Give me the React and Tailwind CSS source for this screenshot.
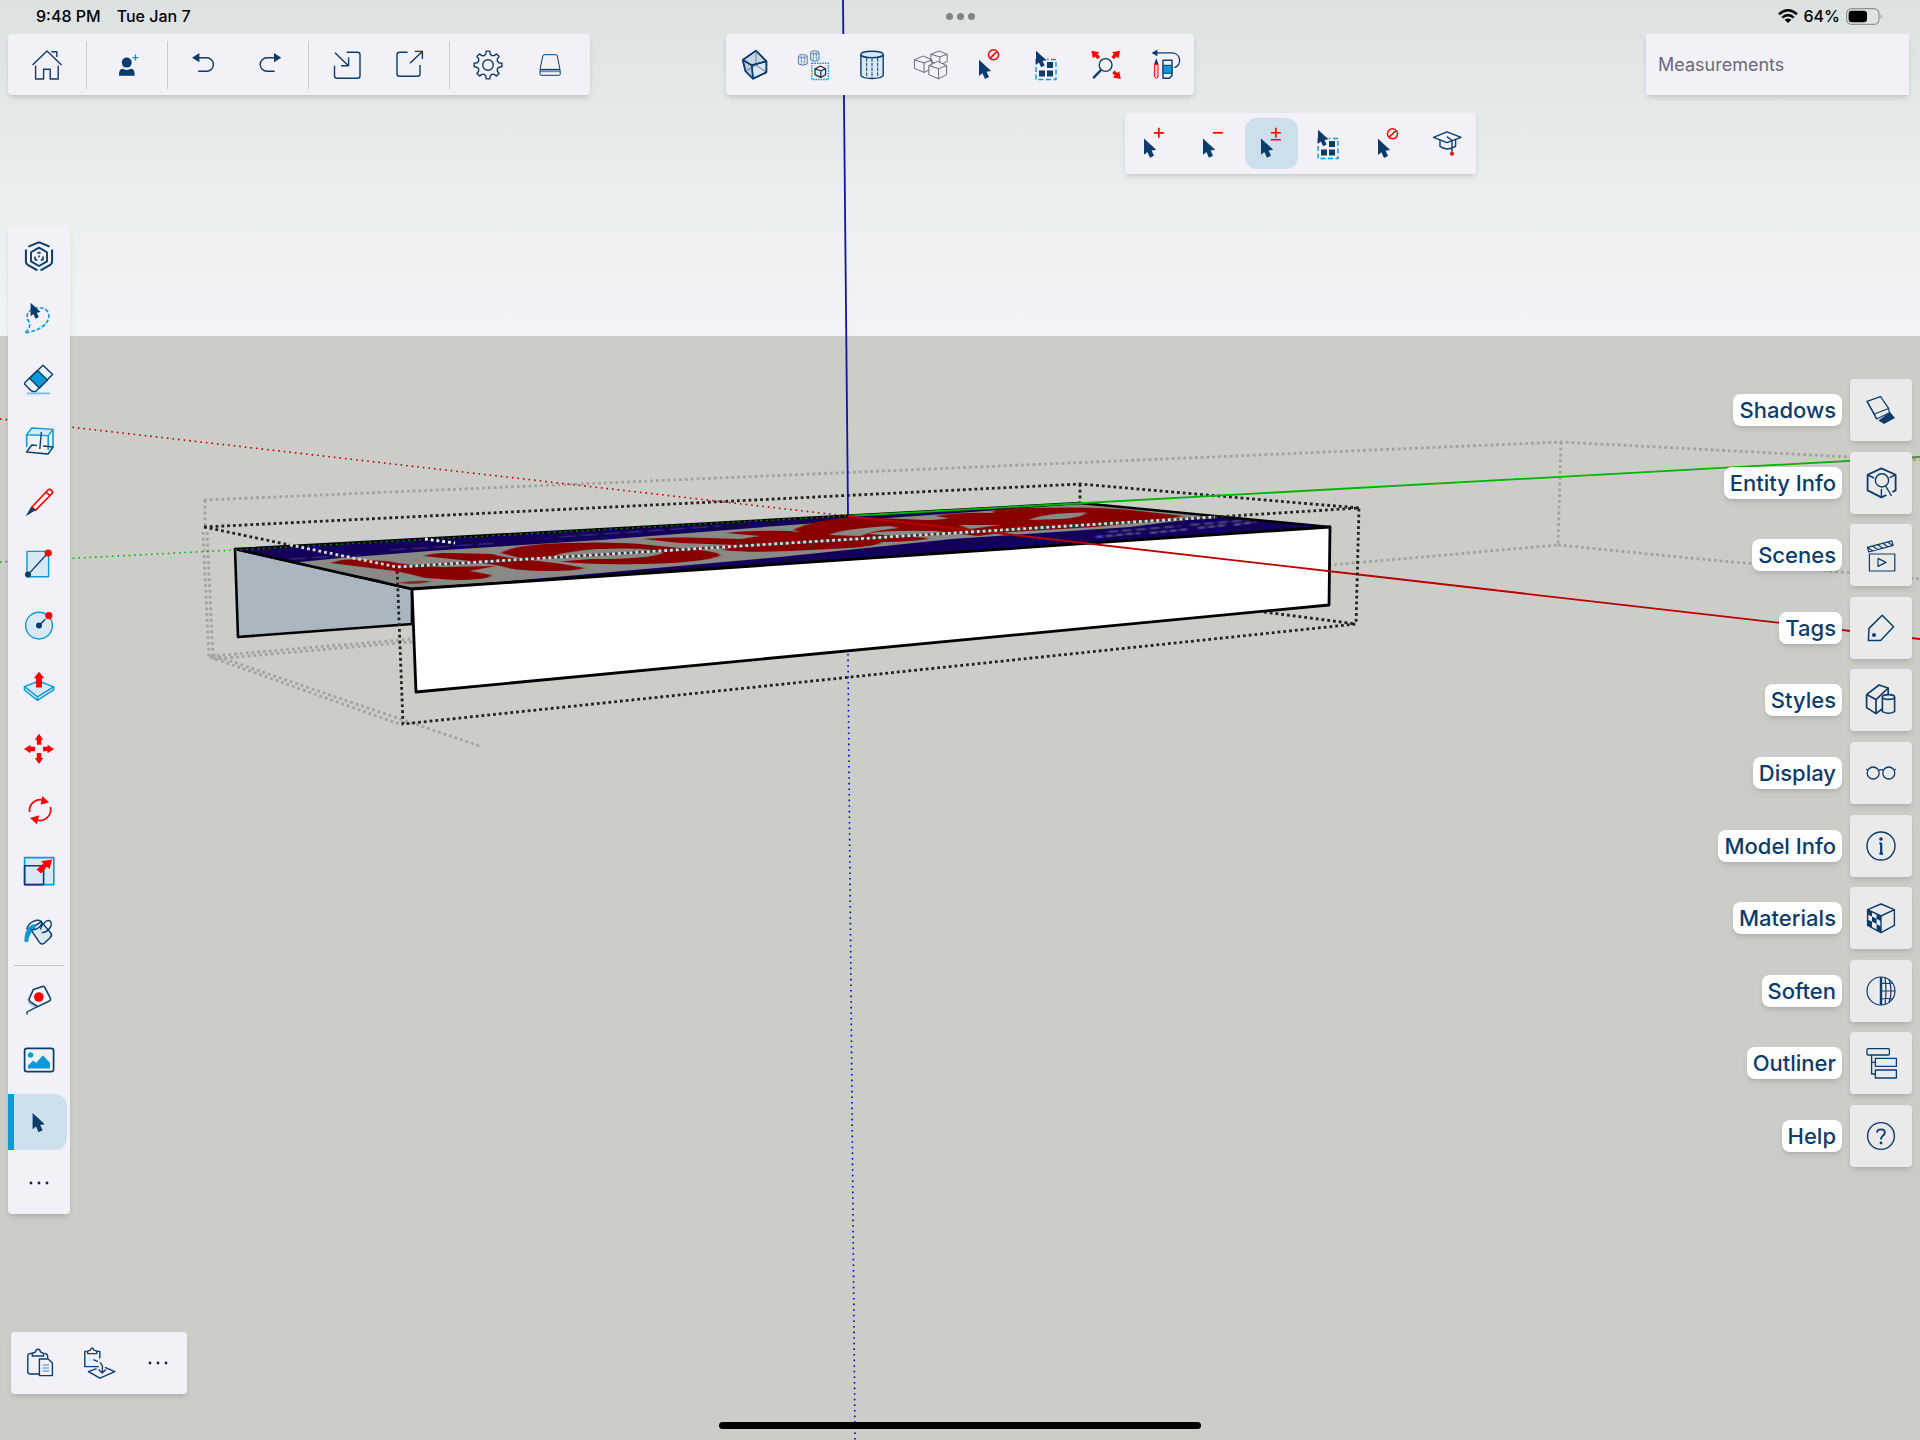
import React, { useState } from 'react';

const NAVY = '#0c3c6b';
const BLUE = '#0a9ad9';
const PALE = '#d8e8f5';
const RED = '#ff0000';

function Icon({ children }) {
  return (
    <svg viewBox="0 0 36 36" className="size-9 shrink-0" fill="none" stroke={NAVY} strokeWidth="1.4" strokeLinejoin="round" aria-hidden="true">
      {children}
    </svg>
  );
}

// Arrow cursor shared by the selection tools, tip at 0,0
function Cursor({ x, y, scale = 1 }) {
  return (
    <path
      d="M0 0V16.3L3.4 13.6L6 19.3L10 17.3L7.6 12L12.2 11.2Z"
      transform={`translate(${x} ${y}) scale(${scale})`}
      fill={NAVY}
      stroke="none"
    />
  );
}

function NoSign() {
  return <path d="M22.5 2.8a5 5 0 1 0 .01 0M19 11.4L26 4.4" stroke={RED} strokeWidth="1.5" />;
}

// Isometric outline of a small cube
function Cube({ x, y, w, h, stroke = '#5d5a6b', strokeWidth = 0.9, fill = 'none' }) {
  const d = `M${x} ${y + h * 0.24}L${x + w * 0.5} ${y}L${x + w} ${y + h * 0.24}V${y + h * 0.76}L${x + w * 0.55} ${y + h}L${x} ${y + h * 0.76}Z
    M${x} ${y + h * 0.24}L${x + w * 0.55} ${y + h * 0.42}L${x + w} ${y + h * 0.24}M${x + w * 0.55} ${y + h * 0.42}V${y + h}`;
  return <path d={d} stroke={stroke} strokeWidth={strokeWidth} fill={fill} />;
}

function gearPath() {
  const pts = [];
  for (let i = 0; i < 8; i += 1) {
    const base = (i * Math.PI) / 4 - Math.PI / 2;
    [[-0.2, 11.2], [-0.13, 14], [0.13, 14], [0.2, 11.2], [0.39, 10.1]].forEach(([a, r]) => {
      pts.push(`${(18 + r * Math.cos(base + a)).toFixed(2)} ${(18 + r * Math.sin(base + a)).toFixed(2)}`);
    });
  }
  return `M${pts.join('L')}Z`;
}

const MultiSelectIcon = (
  <Icon>
    <rect x="6" y="12.5" width="20" height="20" stroke={BLUE} strokeDasharray="5 2.5" />
    <g fill={NAVY} stroke="none">
      <rect x="17" y="15" width="6" height="6" />
      <rect x="9" y="23.5" width="6" height="6" />
      <rect x="17" y="23.5" width="6" height="6" />
    </g>
    <path d="M6 3.7V18L9 15.5L12 18.5L17 16V11Z" fill="#f2f1f7" stroke="none" />
    <Cursor x={6} y={3.7} scale={0.86} />
  </Icon>
);

const CancelSelectIcon = (
  <Icon>
    <Cursor x={8} y={12.7} />
    <NoSign />
  </Icon>
);

const MoreIcon = (
  <Icon>
    <g fill="#1b2138" stroke="none">
      <circle cx="10" cy="18" r="1.4" />
      <circle cx="18" cy="18" r="1.4" />
      <circle cx="26" cy="18" r="1.4" />
    </g>
  </Icon>
);

const fileGroups = [
  [
    {
      name: 'Home',
      icon: (
        <Icon>
          <path d="M3.5 18L18 4L32.5 18M6.6 18.5V32H14.6V22.3H21.2V32H29.2V18.5M22.3 4.7H27.8V10" />
        </Icon>
      ),
    },
  ],
  [
    {
      name: 'Add collaborator',
      icon: (
        <Icon>
          <circle cx="17.7" cy="15.6" r="5" fill={NAVY} stroke="none" />
          <path d="M10 28.7C10 24 11 22 13.5 21.8Q17.7 24 22 21.8C24.8 22 25.7 24 25.7 28.7Z" fill={NAVY} stroke="none" />
          <path d="M26.4 7.6V13.6M23.4 10.6H29.4" stroke={BLUE} />
        </Icon>
      ),
    },
  ],
  [
    {
      name: 'Undo',
      icon: (
        <Icon>
          <path d="M11 10.7H18.6A6.8 6.8 0 0 1 18.6 24.3H10.2" />
          <path d="M4 10.7L11.4 6V15.2Z" fill={NAVY} stroke="none" />
        </Icon>
      ),
    },
    {
      name: 'Redo',
      icon: (
        <Icon>
          <path d="M22 10.7H15A6.8 6.8 0 0 0 15 24.3H22.6" />
          <path d="M29.3 10.7L22 6V15.2Z" fill={NAVY} stroke="none" />
        </Icon>
      ),
    },
  ],
  [
    {
      name: 'Import',
      icon: (
        <Icon>
          <path d="M17.6 5.3H28.5Q31 5.3 31 7.8V28.8Q31 31.3 28.5 31.3H8Q5.5 31.3 5.5 28.8V18.8M6 5.7L19.4 18.7M19.6 10.5V18.8H12" />
        </Icon>
      ),
    },
    {
      name: 'Export',
      icon: (
        <Icon>
          <path d="M14.5 5.3H6.5Q4 5.3 4 7.8V26.8Q4 29.3 6.5 29.3H24.5Q27 29.3 27 26.8V18M17 16.3L29.3 4.4M21.8 4.4H29.4V12" />
        </Icon>
      ),
    },
  ],
  [
    {
      name: 'Settings',
      icon: (
        <Icon>
          <path d={gearPath()} />
          <circle cx="18" cy="18" r="5.3" />
        </Icon>
      ),
    },
    {
      name: 'Storage',
      icon: (
        <Icon>
          <g strokeWidth="1">
            <path d="M10.3 7.7H21.7Q23 7.7 23.3 9L26 22.4H6L8.8 9Q9.2 7.7 10.3 7.7Z" />
            <path d="M6 23.3H26V25.2H6Z" fill="#6f8ba8" stroke="none" />
            <rect x="6" y="22.6" width="20.2" height="5.7" rx="1" />
          </g>
        </Icon>
      ),
    },
  ],
];

const selectTools = [
  {
    name: 'X-ray',
    icon: (
      <Icon>
        <path d="M19 3.7L29.4 14.3V25.3L16 31.7L8.5 24.3L5.7 13Z" fill="#b9cddf" />
        <path d="M5.7 13L14.8 18.3L29.4 14.3L19 3.7Z" fill="#c6d5e2" />
        <path d="M14.8 18.3L29.4 14.3V25.3L16 31.7Z" fill="#d8e6f3" />
        <path d="M19 4V18L9 24M19 18L29 25" stroke="#7f8792" strokeWidth="1.1" />
        <path d="M19 3.7L29.4 14.3V25.3L16 31.7L8.5 24.3L5.7 13ZM5.7 13L14.8 18.3L29.4 14.3M14.8 18.3L16 31.7" strokeWidth="1.6" />
      </Icon>
    ),
  },
  {
    name: 'Hide similar',
    icon: (
      <Icon>
        <g stroke="#5b83a8" strokeWidth="1" fill={PALE}>
          <path d="M2.4 9V17Q6.8 19.4 11.2 17V9" />
          <ellipse cx="6.8" cy="9" rx="4.4" ry="1.4" />
          <path d="M14.6 5.3V13Q18.8 15.4 23 13V5.3" />
          <ellipse cx="18.8" cy="5.3" rx="4.2" ry="1.4" />
          <path d="M5.4 10.5V18M8.4 10.5V18M17.4 6.8V14M20.4 6.8V14" strokeDasharray="2 1" />
        </g>
        <rect x="15.8" y="16.3" width="16.6" height="16.2" stroke={BLUE} strokeWidth="1.4" strokeDasharray="1.6 1" />
        <Cube x={19} y={19} w={10.6} h={11.4} stroke="#2a2830" strokeWidth={1.2} fill={PALE} />
      </Icon>
    ),
  },
  {
    name: 'Hidden geometry',
    icon: (
      <Icon>
        <path d="M6.9 7.4V28.5C9 32.4 27 32.4 29.2 28.5V7.4" fill={PALE} />
        <ellipse cx="18" cy="7.4" rx="11.2" ry="3.2" fill={PALE} />
        <path d="M12.7 11V30.4M18 11V31M23.7 11V30.4" strokeWidth="1" strokeDasharray="3.6 1.2" />
      </Icon>
    ),
  },
  {
    name: 'Hidden objects',
    icon: (
      <Icon>
        <Cube x={1.4} y={9} w={17.6} h={16.4} />
        <Cube x={17.8} y={4} w={16.4} h={14} />
        <Cube x={15.8} y={14.4} w={17.8} h={17.4} fill="#f2f1f7" />
      </Icon>
    ),
  },
  { name: 'Deselect all', icon: CancelSelectIcon },
  { name: 'Multi select', icon: MultiSelectIcon },
  {
    name: 'Zoom extents',
    icon: (
      <Icon>
        <circle cx="17.6" cy="18" r="6.4" />
        <path d="M13 23L5.2 31.2" strokeWidth="2.4" />
        <g fill={RED} stroke="none">
          <path d="M3.4 3.7L11.4 5.2L9.4 7.1L12 9.8L9.6 12.2L7 9.6L5 11.5Z" />
          <path d="M32 3.7L24 5.2L26 7.1L23.4 9.8L25.8 12.2L28.4 9.6L30.4 11.5Z" />
          <path d="M32.8 32L24.8 30.5L26.8 28.6L24.2 25.9L26.6 23.5L29.2 26.1L31.2 24.2Z" />
        </g>
      </Icon>
    ),
  },
  {
    name: 'Undo drawing',
    icon: (
      <Icon>
        <path d="M10 5.9H25.5A7.6 7.6 0 0 1 27.4 20.7" />
        <path d="M4.6 5.9L10.4 2.6V9.2Z" fill={NAVY} stroke="none" />
        <path d="M7.6 17.5H11V30Q9.3 32.6 7.6 30Z" fill="#ffd5d8" stroke={RED} strokeWidth="1" />
        <path d="M7.2 17L9.3 11L11.4 17Z" fill={NAVY} stroke="none" />
        <path d="M16 13.3H25V28.5L22.5 31.3H16Z" fill="#eaf2fa" />
        <path d="M16 18.3H25V26.3H16Z" fill={BLUE} strokeWidth="1" />
      </Icon>
    ),
  },
];

const selectModes = [
  { name: 'Add', icon: <Icon><Cursor x={8} y={12.5} /><path d="M22.8 1.8V11.8M17.8 6.8H27.8" stroke={RED} strokeWidth="1.7" /></Icon> },
  { name: 'Subtract', icon: <Icon><Cursor x={8} y={12.5} /><path d="M17.8 6.8H27.8" stroke={RED} strokeWidth="1.7" /></Icon> },
  { name: 'Add or subtract', icon: <Icon><Cursor x={8} y={12.5} /><path d="M22.8 1.8V11.8M17.8 6.8H27.8M17.8 13.8H27.8" stroke={RED} strokeWidth="1.6" /></Icon> },
  { name: 'Multi select mode', icon: MultiSelectIcon },
  { name: 'Clear selection', icon: CancelSelectIcon },
  {
    name: 'Learn',
    icon: (
      <Icon>
        <path d="M4.5 11.4L18 5.8L32 11.4L18 16.6Z" />
        <path d="M11 14V20.4Q18 25.6 26.6 20.4V14M18 10.6L23 14.5V26" />
        <circle cx="23" cy="27.8" r="2" fill={RED} stroke="none" />
      </Icon>
    ),
  },
];

const drawTools = [
  {
    name: 'Search',
    icon: (
      <Icon>
        <path d="M7.4 7.6L16.4 3.8Q18 3.2 19.6 3.8L28.6 7.6M4.9 10.4V22.6Q4.9 24.8 6.8 25.8L16.4 31.4M31.1 10.4V22.6Q31.1 24.8 29.2 25.8L19.6 31.4" strokeWidth="2" />
        <path d="M18 8.6L26 13.2V22.4L18 27L10 22.4V13.2Z" strokeWidth="1.9" />
        <path d="M16.4 14.2L18 13.4L19.6 14.2M14 17.6V20.2L16.2 21.4M22 17.6V20.2L19.8 21.4M18 16.4V18.2" strokeWidth="1.7" />
      </Icon>
    ),
  },
  {
    name: 'Lasso',
    icon: (
      <Icon>
        <path d="M4.4 32.6C10 27 9.6 24 6.8 20C4 14 9 8.6 17 7.8C23 7.2 28 10.4 27.8 16.4C27.6 24 18 31 4.4 32.6Z" stroke={BLUE} strokeWidth="1.6" strokeDasharray="4 1.8" />
        <Cursor x={9.6} y={2.8} scale={0.82} />
      </Icon>
    ),
  },
  {
    name: 'Eraser',
    icon: (
      <Icon>
        <path d="M6 31.4H29" stroke="#6fc0e8" strokeWidth="1.8" />
        <path d="M22 3.2L31.6 12.6L15.4 28.8Q12.6 30.6 9.8 28.4L4 22.6Q3 21.4 4 20.6Z" fill="#e9f2fb" />
        <path d="M16.6 8.4L26.4 18L18.4 26L8.6 16.2Z" fill={BLUE} />
      </Icon>
    ),
  },
  {
    name: 'Section plane',
    icon: (
      <Icon>
        <path d="M5.7 11.7L10.7 5L32 6.4L27.2 12.6Z" fill={PALE} stroke={BLUE} />
        <path d="M5.7 11.7V24M27.2 12.6V27M32 6.4V23.4" stroke={BLUE} strokeWidth="1.6" />
        <path d="M20.4 9L18.8 26M16 22.4L10.8 22L5.6 29L27 31L32.2 24L22 23" />
      </Icon>
    ),
  },
  {
    name: 'Line',
    icon: (
      <Icon>
        <path d="M11 22L26.6 5.2Q28.4 3.4 30.4 5.4Q32.4 7.4 30.6 9L14.4 25.4ZM25 7L29 10.8" fill="#fff5f6" stroke={RED} strokeWidth="1.6" />
        <path d="M4.6 31.2L10.4 21.6L14.2 25.6Z" fill={NAVY} stroke="none" />
      </Icon>
    ),
  },
  {
    name: 'Rectangle',
    icon: (
      <Icon>
        <rect x="6" y="5.4" width="21.6" height="25.4" fill={PALE} stroke={BLUE} />
        <path d="M7 28.6L26 8" />
        <circle cx="27.2" cy="7" r="3.6" fill={RED} stroke="none" />
        <circle cx="7" cy="28.6" r="3" fill={NAVY} stroke="none" />
      </Icon>
    ),
  },
  {
    name: 'Circle',
    icon: (
      <Icon>
        <circle cx="18" cy="17.6" r="13.4" fill={PALE} stroke={BLUE} />
        <path d="M18 17.6L27 8.4" strokeDasharray="9 1.6" />
        <circle cx="27.8" cy="7.6" r="3.6" fill={RED} stroke="none" />
        <circle cx="18" cy="17.6" r="3" fill={NAVY} stroke="none" />
      </Icon>
    ),
  },
  {
    name: 'Push/pull',
    icon: (
      <Icon>
        <path d="M3.4 17.6L18 12L32.6 17.8V20.8L16.4 31.4L3.4 21Z" fill={PALE} stroke={BLUE} />
        <path d="M3.4 17.6L16.4 27.8L32.6 17.8M16.4 27.8V31.4" stroke={BLUE} />
        <path d="M18 2.8L23.2 9.2H21V18.4H15V9.2H12.8Z" fill={RED} stroke="none" />
      </Icon>
    ),
  },
  {
    name: 'Move',
    icon: (
      <Icon>
        <g fill={RED} stroke="none">
          <path d="M18 2.8L22.2 8.8H20.2V13.8H15.8V8.8H13.8Z" />
          <path d="M18 33L22.2 27H20.2V22H15.8V27H13.8Z" />
          <path d="M3 18L9.4 13.8V15.8H14V20.2H9.4V22.2Z" />
          <path d="M33 18L26.6 13.8V15.8H22V20.2H26.6V22.2Z" />
        </g>
      </Icon>
    ),
  },
  {
    name: 'Rotate',
    icon: (
      <Icon>
        <path d="M8.6 20A10.8 10.8 0 0 1 24 8.8M29.4 15A10.8 10.8 0 0 1 14 27.2" stroke={RED} strokeWidth="1.7" />
        <path d="M21.4 4L28 10.4L19.6 12.4ZM15.8 32.2L9 26L18.2 23.2Z" fill={RED} stroke="none" />
      </Icon>
    ),
  },
  {
    name: 'Scale',
    icon: (
      <Icon>
        <rect x="3.6" y="3.6" width="29.2" height="27" fill={PALE} stroke={BLUE} strokeWidth="1.6" />
        <rect x="3.6" y="11.8" width="19" height="18.8" strokeWidth="1.6" />
        <path d="M31 5.4L28.6 15L26 12.8L20 19.4L15.6 15.4L22.4 9.4L20 7.2Z" fill={RED} stroke="none" />
      </Icon>
    ),
  },
  {
    name: 'Paint',
    icon: (
      <Icon>
        <path d="M9.4 14L18.4 27.4Q20.6 30.2 23.2 28.2L29.4 22.6Q31.6 20.4 29.6 17.8L20.2 6.6Z" fill={PALE} />
        <path d="M14 9C8 10 3.4 15 3.4 26Q5.4 28.4 7.4 26C8 20 10 17 14.4 13.4Z" fill={BLUE} stroke="none" />
        <path d="M5.6 14.2C8 7 16 3.4 20.2 6.4C22 9.6 16.6 16 9.6 14.4M19.4 14.6C21 8 27 3.6 29.6 6.6C32 10 27 18 20.6 17.6" />
      </Icon>
    ),
  },
];

const modelTools = [
  {
    name: 'Tape measure',
    icon: (
      <Icon>
        <path d="M8.4 17L12.4 8.6L21.6 5.4Q23 5 23.8 6.4L29.4 17.4Q30 19 28.4 20L16.8 25.6L9.6 20.8Q7.6 19.2 8.4 17Z" fill="#f7f7fb" strokeWidth="1.6" />
        <path d="M7 18L8.4 22L14 25.4" stroke="#6f8ba8" strokeWidth="1.8" strokeDasharray="1.4 0.8" />
        <path d="M16.4 25.6L6 31V33.6" />
        <circle cx="17.8" cy="16" r="4.8" fill={RED} stroke="none" />
      </Icon>
    ),
  },
  {
    name: 'Image',
    icon: (
      <Icon>
        <rect x="3.6" y="6.4" width="29" height="23.2" rx="2.4" strokeWidth="1.7" />
        <circle cx="9.6" cy="13" r="2.7" fill={BLUE} stroke="none" />
        <path d="M7 26.4V23.6L12.4 18.6L15 21L22 13.2L29 21V26.4Z" fill={BLUE} stroke="none" />
      </Icon>
    ),
  },
  { name: 'Select', icon: <Icon><Cursor x={11.6} y={9} /></Icon> },
  { name: 'More tools', icon: MoreIcon },
];

const clipboardTools = [
  {
    name: 'Paste',
    icon: (
      <Icon>
        <path d="M11.4 8.4H8.6Q5.8 8.4 5.8 11.2V26.4Q5.8 29 8.6 29H17M22.4 8.4Q25.6 8.4 25.6 11.2V13.4" />
        <path d="M10.2 11V8.4L13.4 7Q14 4.2 16 4.2Q18 4.2 18.6 7L21.6 8.4V11Z" />
        <path d="M17.4 14H26.2L30.4 18V30.6H17.4Z" />
        <path d="M20.6 20H27M20.6 23H27M20.6 26H27" stroke="#5b83a8" strokeWidth="1.1" />
      </Icon>
    ),
  },
  {
    name: 'Paste in place',
    icon: (
      <Icon>
        <path d="M5.6 6.4H3.8V21.6H17.8M15.4 6.4H18.8V13.6" />
        <path d="M6.6 8.6V6.2L9.4 5.2Q11.2 0.8 13 5.2L15.8 6.2V8.6Z" />
        <path d="M15.6 23.6L7.4 26.6L19 33.2L33.8 26.6L24 22.4M12.4 14.6L17 16.6M18.8 17.4L21.4 20.6V27.6M17.6 24.4L21.2 28L24.8 24.4" />
      </Icon>
    ),
  },
  { name: 'More actions', icon: MoreIcon },
];

const panels = [
  {
    name: 'Shadows',
    icon: (
      <Icon>
        <path d="M27 20L32 26L21 32L15.4 28.4Z" fill={NAVY} stroke="none" />
        <path d="M4 9.4L17.6 4.6L25.6 16.4L26.4 20.8L13.6 27Z" fill="#eaeaea" strokeWidth="1.2" />
        <path d="M25.6 16.4L11.4 22M4 9.4L11.4 22L13.6 27" strokeWidth="1.1" />
      </Icon>
    ),
  },
  {
    name: 'Entity Info',
    icon: (
      <Icon>
        <path d="M23.4 30L18.4 32.4L4.6 25.4V9.8L18.4 3.4L32.6 9.8V25.4L29.4 27" strokeWidth="1.8" />
        <circle cx="19" cy="15.4" r="6.6" />
        <path d="M22.6 21L28.6 31M5 10L11 13M32 10L26.6 12.6M18.4 32V24" />
      </Icon>
    ),
  },
  {
    name: 'Scenes',
    icon: (
      <Icon>
        <g strokeWidth="1.2">
          <path d="M4.4 10.4L28.8 3.8L30.2 8.4L5.8 15ZM4.4 10.4L9.8 14M9.4 9L14.6 12.6M14.6 7.6L19.8 11.2M19.8 6.2L24.8 9.8M24.6 5L29.6 8.4" />
          <rect x="6.4" y="17" width="25.4" height="17" />
          <path d="M15 21.4V29.4L23 25.4Z" />
        </g>
      </Icon>
    ),
  },
  {
    name: 'Tags',
    icon: (
      <Icon>
        <path d="M6 18.4L19.2 5.2L30.6 16.8L17.6 30.4H5.4Z" strokeWidth="1.5" />
        <circle cx="11" cy="25" r="2" fill={NAVY} stroke="none" />
      </Icon>
    ),
  },
  {
    name: 'Styles',
    icon: (
      <Icon>
        <path d="M3.6 12.6L16 3L25.2 6V12.6M3.6 12.6V25.6L13 31.6L19 27M3.6 12.6L13 17.6L25.2 6M13 17.6V31.6" strokeWidth="1.7" />
        <path d="M19.4 15V29.6Q25.6 33 31.6 29.6V15" fill="#eaeaea" strokeWidth="1.6" />
        <ellipse cx="25.5" cy="15" rx="6.1" ry="2.4" fill="#eaeaea" strokeWidth="1.6" />
      </Icon>
    ),
  },
  {
    name: 'Display',
    icon: (
      <Icon>
        <circle cx="10.2" cy="18" r="6" strokeWidth="1.3" />
        <circle cx="25.8" cy="18" r="6" strokeWidth="1.3" />
        <path d="M15.6 15.6Q18 13.6 20.4 15.6M4.4 15.2L3.4 14M31.6 15.2L32.6 14" strokeWidth="1.3" />
      </Icon>
    ),
  },
  {
    name: 'Model Info',
    icon: (
      <Icon>
        <circle cx="18" cy="18" r="14" />
        <path d="M18.2 15V26M16.4 15.4H18.2M16.4 25.6H20" strokeWidth="2.2" />
        <circle cx="18" cy="11" r="1.8" fill={NAVY} stroke="none" />
      </Icon>
    ),
  },
  {
    name: 'Materials',
    icon: (
      <Icon>
        <path d="M18 4L31.4 9.6V25.4L18 32.6L4.6 25.4V9.6ZM4.6 9.6L18 16L31.4 9.6M18 16V32.6" />
        <path d="M4.6 9.6L9 11.8V16.6L4.6 14.4ZM9 16.6L13.6 18.8V24L9 21.6ZM13.6 14L18 16V21.2L13.6 18.8ZM4.6 19.8L9 21.6V27.6L4.6 25.4ZM13.6 24L18 26.4V32.6L13.6 30Z" fill={NAVY} stroke="none" />
      </Icon>
    ),
  },
  {
    name: 'Soften',
    icon: (
      <Icon>
        <circle cx="18" cy="18" r="14" strokeWidth="1.2" />
        <path d="M18 4V32" strokeWidth="2.4" />
        <path d="M18 10Q24 11 29.4 10M18 18H32M18 26Q24 25 29.4 26M22 4.6Q24 18 22 31.4M26 6.2Q30 18 26 29.8" strokeWidth="1.2" />
      </Icon>
    ),
  },
  {
    name: 'Outliner',
    icon: (
      <Icon>
        <g strokeWidth="1.3">
          <rect x="4" y="3.6" width="22.4" height="6.4" rx="1" />
          <rect x="12.4" y="13.4" width="21" height="8" />
          <rect x="12.4" y="25" width="21" height="8" />
          <path d="M8.6 10V29H12.4M8.6 17.4H12.4" />
        </g>
      </Icon>
    ),
  },
  {
    name: 'Help',
    icon: (
      <Icon>
        <circle cx="18" cy="18" r="13.4" />
        <path d="M14 14.6Q14.2 11.4 18 11.4Q21.8 11.4 21.8 14.6Q21.8 16.4 19.8 17.8Q18 19 18 21.6" strokeWidth="1.9" />
        <circle cx="18" cy="25" r="1.4" fill={NAVY} stroke="none" />
      </Icon>
    ),
  },
];

const topFace = 'M235 549L1080 503L1330 527L412 589Z';

/**
 * @desc The 3D viewport: axes, bounding boxes and the textured box model.
 */
function Viewport() {
  return (
    <svg viewBox="0 0 1920 1440" preserveAspectRatio="xMidYMid slice" className="absolute inset-0 h-full w-full" fill="none" role="img" aria-label="Model viewport">
      <defs>
        <linearGradient id="sky" x1="0" y1="0" x2="0" y2="1">
          <stop offset="0" stopColor="#dce1e2" />
          <stop offset="0.55" stopColor="#eaedee" />
          <stop offset="1" stopColor="#f2f3f6" />
        </linearGradient>
        <clipPath id="lid">
          <path d={topFace} />
        </clipPath>
        <filter id="soft" x="-5%" y="-20%" width="110%" height="140%">
          <feGaussianBlur stdDeviation="1.4 0.5" />
        </filter>
      </defs>
      <rect width="1920" height="336" fill="url(#sky)" />
      <rect y="336" width="1920" height="1104" fill="#cccdc8" />

      {/* outer bounding box */}
      <g stroke="#a3a3a0" strokeWidth="2.8" strokeDasharray="2.8 3">
        <path d="M204 500L1561 442L1850 457L1920 460" />
        <path d="M1561 442L1558 545L1331 565M1558 545L1700 559L1920 579" />
        <path d="M205 500V527M203 532L209 657M207 532L213 657" />
        <path d="M211 656L412 639M213 659L412 642M210 657L402 725M213 655L403 720L480 746" />
      </g>

      {/* axes behind the model */}
      <path d="M0 419L847 516" stroke="#b80000" strokeWidth="1.6" strokeDasharray="1.6 4" />
      <path d="M0 562L235 550" stroke="#00b400" strokeWidth="1.6" strokeDasharray="1.6 4" />
      <path d="M848 654L855 1440" stroke="#0000b4" strokeWidth="1.6" strokeDasharray="1.6 4" />
      <path d="M843 0L848 515" stroke="#1414a8" strokeWidth="1.8" />

      {/* back half of the selection box */}
      <g stroke="#222222" strokeWidth="2.8" strokeDasharray="2.8 3">
        <path d="M204 527L1080 484L1359 508M1080 484V503" />
        <path d="M1264 612L1356 624" />
      </g>

      <path d="M235 549L412 589V624L238 637Z" fill="#aab7c1" stroke="#000000" strokeWidth="2.6" strokeLinejoin="round" />
      <path d={topFace} fill="#12005a" />
      <g clipPath="url(#lid)">
        <g filter="url(#soft)">
          <path d="M290 563L340 558L430 551L600 540L790 525L930 515L1067 505L1082 503L1216 516L1130 527L952 539L780 557L600 573L412 590L380 580Z" fill="#898a86" />
          <g fill="#8a0000">
            <path d="M330 563Q340 559 350 559.5L387 561Q410 566 443 567L496 566L470 571L492 575Q490 580 455 580L425 578Q410 574 395 571Z" />
            <path d="M398 583Q410 580 432 581Q424 584 410 584Z" opacity="0.7" />
            <path d="M423 556Q433 552.5 450 553L493 554Q505 558 530 560L563 564L585 568Q578 571 550 571Q515 571 500 566L470 561Z" />
            <path d="M500 553Q512 546 545 544Q600 541 640 544L690 549Q724 552 720 556Q700 563 640 564Q590 565 560 561.5L590 559Q650 559 662 553Q655 547 597 549Q565 551 545 559L520 558Z" />
            <path d="M643 539Q660 537 690 537.5L740 539L760 536L726 533Q750 530 790 531L850 540L884 541Q880 546 850 548L790 551Q750 553 722 550L735 545L680 543Z" />
            <path d="M793 530Q810 520 856 517L925 520Q940 520 948 518L935 516Q960 512 992 513Q990 508 1029 508Q1100 506 1140 511L1184 516Q1160 521 1094 527L1010 532L978 536L935 531Q880 530 868 534L929 538Q925 541 883 542Q840 543 815 538Z" />
          </g>
          <g fill="#898a86">
            <path d="M830 535Q840 529 890 526L898 528Q870 531 860 536Z" />
            <path d="M1030 520Q1042 513 1086 512.5Q1080 518 1060 519Z" />
            <path d="M960 525L1000 525L970 529Z" />
          </g>
          <g stroke="#5f5a86" strokeWidth="2.6">
            <path d="M1096 537L1140 533M1150 533L1190 529M1198 528L1228 525M1234 525L1256 522" strokeDasharray="7 3" opacity="0.8" />
            <path d="M1108 532L1180 526M1190 525L1250 520" strokeDasharray="10 4" opacity="0.6" />
            <path d="M290 559L360 555M390 550L500 543M560 537L720 526" strokeDasharray="16 6" strokeWidth="1.6" opacity="0.4" />
          </g>
        </g>
      </g>
      <path d={topFace} stroke="#000000" strokeWidth="2.4" strokeLinejoin="round" />
      <path d="M412 589L1330 527L1329 605L416 692Z" fill="#ffffff" stroke="#000000" strokeWidth="2.8" strokeLinejoin="round" />

      {/* axes over the model */}
      <path d="M235 550L847 516" stroke="#00a000" strokeWidth="1.4" strokeDasharray="1.6 4" />
      <path d="M848 516L1920 457" stroke="#00b400" strokeWidth="1.8" />
      <path d="M848 516L1380 577L1920 639" stroke="#b80000" strokeWidth="1.8" />

      {/* front half of the selection box */}
      <g stroke="#222222" strokeWidth="2.8" strokeDasharray="2.8 3">
        <path d="M204 527L290 545M1215 517L1359 508L1356 624L403 724L397 567" />
      </g>
      <path d="M397 567L1215 517" stroke="#3a3a3a" strokeWidth="2.6" />
      <path d="M290 545L397 567L1215 517" stroke="#dcdcdc" strokeWidth="2.8" strokeDasharray="2.8 3" />
      <path d="M425 539L455 543" stroke="#ffffff" strokeWidth="2.8" strokeDasharray="2.8 3" />
    </svg>
  );
}

function ToolButton({ tool, className = '' }) {
  return (
    <button type="button" aria-label={tool.name} className={`flex items-center justify-center ${className}`}>
      {tool.icon}
    </button>
  );
}

function StatusBar() {
  return (
    <div className="grid h-[34px] grid-cols-3 items-center px-9 pb-0.5 text-base font-medium leading-6 text-black">
      <div className="flex gap-4">
        <span>9:48 PM</span>
        <span>Tue Jan 7</span>
      </div>
      <div className="flex justify-center gap-1">
        <span className="size-[7px] rounded-full bg-[#7f8487]" />
        <span className="size-[7px] rounded-full bg-[#7f8487]" />
        <span className="size-[7px] rounded-full bg-[#7f8487]" />
      </div>
      <div className="flex items-center justify-end gap-1.5">
        <svg viewBox="0 0 20 14" className="h-[14px] w-5" fill="none" stroke="#000000" strokeWidth="2.5" aria-hidden="true">
          <path d="M1 5.2Q10 -2.6 19 5.2M4.2 8.6Q10 3.6 15.8 8.6" />
          <path d="M10 14L6.6 10.8Q10 8.2 13.4 10.8Z" fill="#000000" stroke="none" />
        </svg>
        <span>64%</span>
        <svg viewBox="0 0 38 17" className="h-[17px] w-[38px]" aria-hidden="true">
          <rect x="0.6" y="0.6" width="32.4" height="15.8" rx="5" fill="none" stroke="#8f9496" strokeWidth="1.2" />
          <rect x="2.6" y="2.8" width="18.4" height="11.4" rx="3.2" fill="#000000" />
          <path d="M34.8 6Q37 8.5 34.8 11Z" fill="#8f9496" />
        </svg>
      </div>
    </div>
  );
}

function App() {
  const [measurement, setMeasurement] = useState('');

  return (
    <div className="relative flex min-h-screen flex-col overflow-hidden bg-[#cccdc8] font-['Inter','Liberation_Sans',sans-serif]">
      <Viewport />

      <div className="relative flex grow flex-col">
        <StatusBar />

        <header className="grid grid-cols-[1fr_auto_1fr] items-start px-2">
          <nav aria-label="File" className="flex h-[61px] items-center divide-x divide-[#c9c9cf] justify-self-start rounded-sm bg-[#f2f1f7] shadow-md">
            {fileGroups.map((group) => (
              <div key={group[0].name} className="flex h-12 px-1.5 first:px-[7px] nth-2:px-2">
                {group.map((tool) => (
                  <ToolButton key={tool.name} tool={tool} className="w-16" />
                ))}
              </div>
            ))}
          </nav>
          <nav aria-label="Selection" className="grid h-[61px] w-[468px] grid-cols-8 rounded-sm bg-[#f2f1f7] shadow-md">
            {selectTools.map((tool) => (
              <ToolButton key={tool.name} tool={tool} />
            ))}
          </nav>
          <input
            type="text"
            aria-label="Measurements"
            placeholder="Measurements"
            value={measurement}
            onChange={(e) => setMeasurement(e.target.value)}
            className="mr-[3px] h-[61px] w-[263px] justify-self-end bg-[#f2f1f7] px-3 text-lg text-[#3b3a4b] shadow-md outline-none placeholder:text-[#6b6a7a]"
          />
        </header>

        <div className="mt-[18px] flex justify-end pr-[444px]">
          <nav aria-label="Selection mode" className="grid h-[61px] w-[351px] grid-cols-6 rounded-sm bg-[#f2f1f7] shadow-md">
            {selectModes.map((tool, i) => (
              <ToolButton
                key={tool.name}
                tool={tool}
                className={i === 2 ? 'mx-[3px] my-[5px] rounded-xl bg-[#cddfeb]' : ''}
              />
            ))}
          </nav>
        </div>

        <main className="mt-[52px] flex items-start justify-between px-2">
          <nav aria-label="Tools" className="w-[62px] rounded-sm bg-[#f2f1f7] shadow-md">
            <div className="grid h-[738px] grid-rows-12">
              {drawTools.map((tool) => (
                <ToolButton key={tool.name} tool={tool} />
              ))}
            </div>
            <hr className="mx-1.5 mb-0.5 mt-px border-[#c4c4ca]" />
            <div className="grid h-[246px] grid-rows-4">
              {modelTools.map((tool) => (
                <ToolButton
                  key={tool.name}
                  tool={tool}
                  className={tool.name === 'Select' ? 'my-[3px] mr-[3px] rounded-r-xl border-l-6 border-[#0a9ad9] bg-[#cddfeb] pr-[3px]' : ''}
                />
              ))}
            </div>
          </nav>

          <aside className="mt-[153px] flex h-[788px] flex-col justify-between">
            {panels.map((panel, i) => (
              <div key={panel.name} className="flex items-center justify-end gap-2">
                <label htmlFor={`panel-${i}`} className="rounded-lg bg-white px-1.5 py-0.5 text-[22px] font-medium leading-7 text-[#0c3c6b] shadow-md">
                  {panel.name}
                </label>
                <button type="button" id={`panel-${i}`} className="flex size-[62px] items-center justify-center rounded-sm bg-[#eaeaea] shadow-md">
                  {panel.icon}
                </button>
              </div>
            ))}
          </aside>
        </main>

        <footer className="mt-auto flex flex-col items-start px-[11px] pb-[11px]">
          <div className="grid h-[62px] w-[176px] grid-cols-3 rounded-sm bg-[#f2f1f7] shadow-md">
            {clipboardTools.map((tool) => (
              <ToolButton key={tool.name} tool={tool} />
            ))}
          </div>
          <div className="mt-7 h-[7px] w-[482px] self-center rounded-full bg-black" />
        </footer>
      </div>
    </div>
  );
}

export default App;
